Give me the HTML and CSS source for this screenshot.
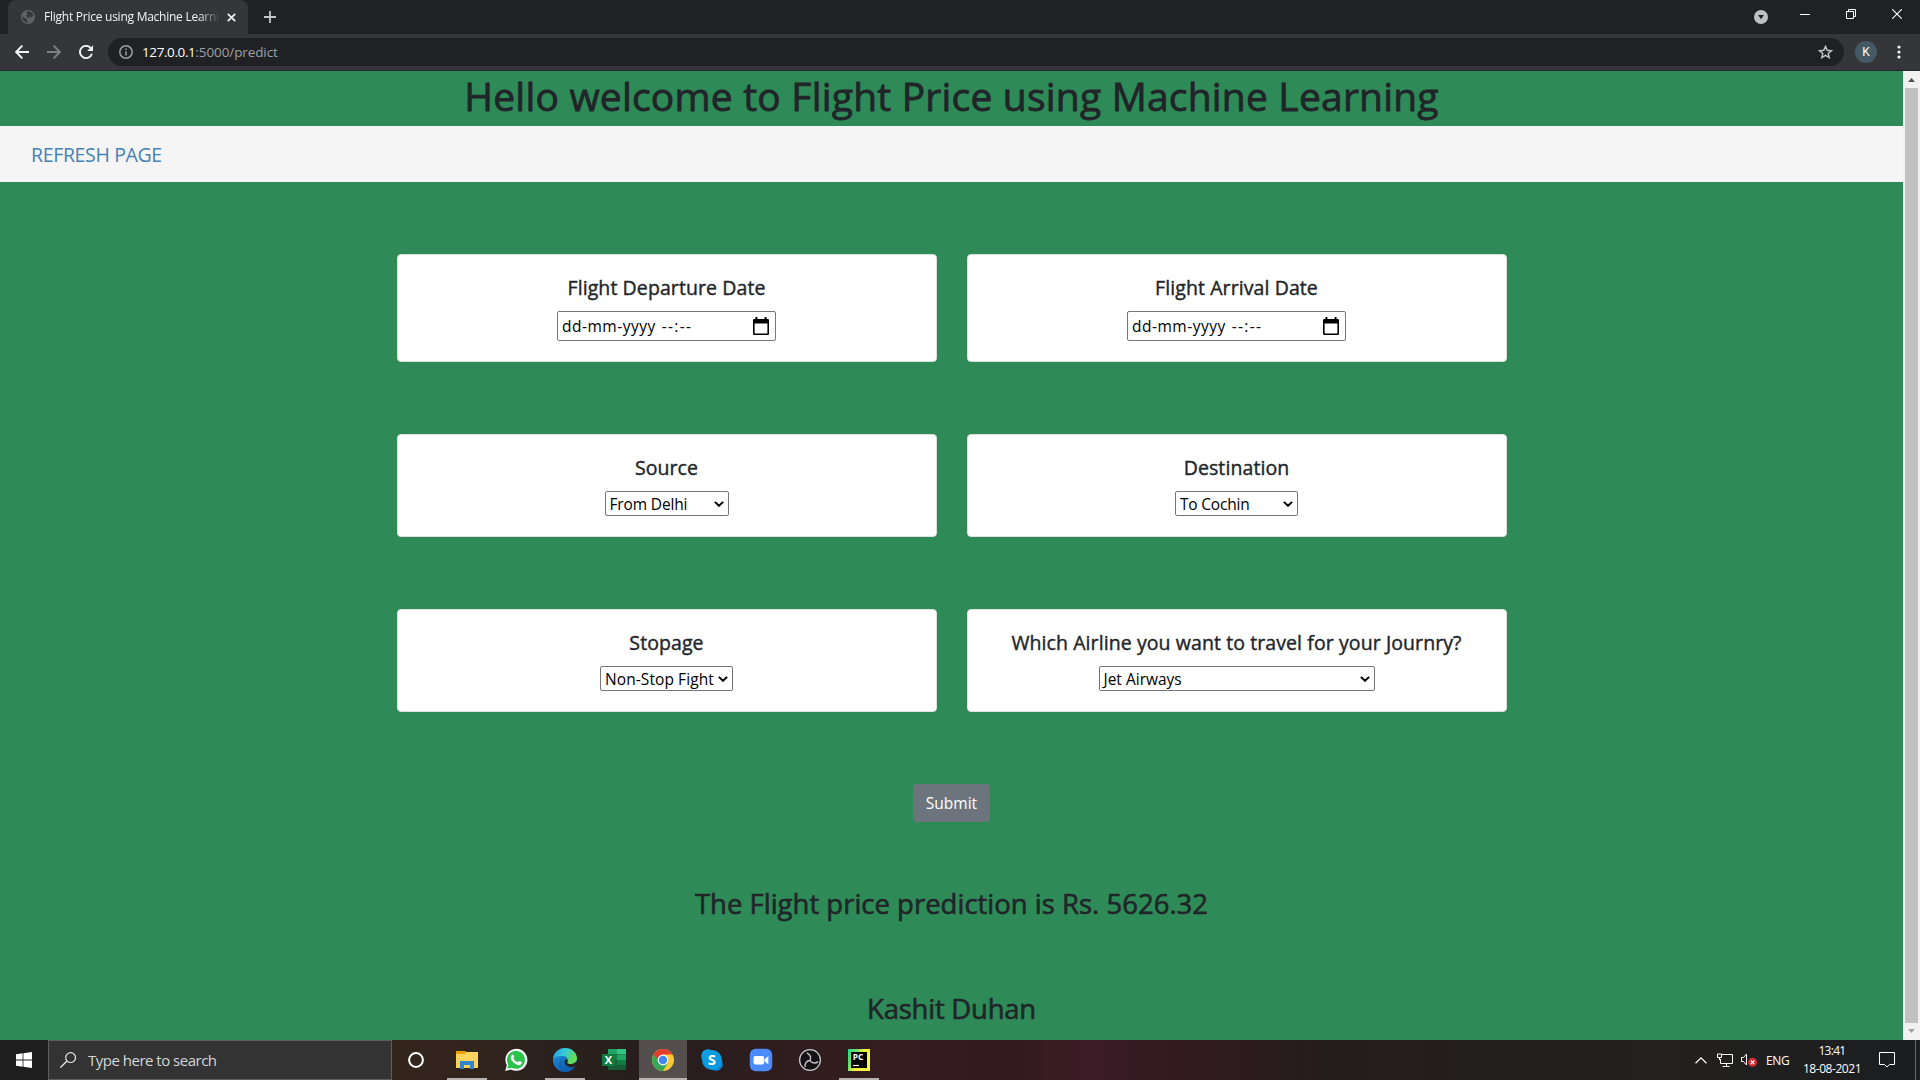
FILE: index.html
```html
<!DOCTYPE html>
<html lang="en">
<head>
<meta charset="utf-8">
<title>Flight Price using Machine Learning</title>
<link rel="stylesheet" href="styles.css">
</head>
<body>
<div class="tabstrip">
  <div class="tab">
    <svg class="tab-globe" viewBox="0 0 14 14"><circle cx="7" cy="7" r="7" fill="#5f6368"/><path d="M1.6 6.2 3.8 8.2 5.6 8.4 5.9 10.6 7 12.4 5.6 12.6A6 6 0 0 1 1.4 6.8ZM5.2 1.6 8.8 1.4 11.6 3.4 12.4 5 10.6 7.2 8.6 6.6 8 8.2 6 7 4.8 5.6 6.6 4.6Z" fill="#35363a"/></svg>
    <span class="tab-title">Flight Price using Machine Learning</span>
    <svg class="tab-close" viewBox="0 0 9 9"><path d="M.8.8 8.2 8.2M8.2.8.8 8.2" stroke="#f1f3f4" stroke-width="1.7"/></svg>
  </div>
  <svg class="new-tab" viewBox="0 0 12 12"><path d="M6 0V12M0 6H12" stroke="#c4c7ca" stroke-width="1.8"/></svg>
  <div class="window-controls">
    <svg class="ctl-search" viewBox="0 0 14 14"><circle cx="7" cy="7" r="7" fill="#bdc1c6"/><path d="M4 5H10L7 9.2Z" fill="#202124"/></svg>
    <svg class="ctl-min" viewBox="0 0 10 10"><path d="M0 5.5H10" stroke="#fff"/></svg>
    <svg class="ctl-restore" viewBox="0 0 10 10"><path d="M.5 2.5H7.5V9.5H.5ZM2.5 2.5V.5H9.5V7.5H7.5" fill="none" stroke="#fff"/></svg>
    <svg class="ctl-close" viewBox="0 0 10 10"><path d="M.2.2 9.8 9.8M9.8.2.2 9.8" stroke="#fff" stroke-width="1.1"/></svg>
  </div>
</div>
<div class="toolbar">
  <svg class="nav-icon" viewBox="0 0 14 14"><path d="M14 7H1.5M7.3 .7 1.2 7 7.3 13.3" fill="none" stroke="#f1f3f4" stroke-width="1.9"/></svg>
  <svg class="nav-icon" viewBox="0 0 14 14"><path d="M0 7H12.5M6.7 .7 12.8 7 6.7 13.3" fill="none" stroke="#7d7f82" stroke-width="1.9"/></svg>
  <svg class="nav-icon" viewBox="0 0 14 14"><path d="M12.9 8.8A6.1 6.1 0 1 1 11.6 2.9" fill="none" stroke="#f1f3f4" stroke-width="1.9"/><path d="M14 .2V6H8.2Z" fill="#f1f3f4"/></svg>
  <div class="omnibox">
    <svg class="info" viewBox="0 0 14 14"><circle cx="7" cy="7" r="6.2" fill="none" stroke="#9aa0a6" stroke-width="1.5"/><path d="M7 6.2V10.4M7 3.6V5.1" stroke="#9aa0a6" stroke-width="1.5"/></svg>
    <span class="url"><span class="host">127.0.0.1</span><span class="path">:5000/predict</span></span>
    <svg class="star" viewBox="0 0 15 14"><path d="M7.5 1.4 9.2 5.3 13.5 5.7 10.2 8.4 11.2 12.6 7.5 10.4 3.8 12.6 4.8 8.4 1.5 5.7 5.8 5.3Z" fill="none" stroke="#c4c7ca" stroke-width="1.4"/></svg>
  </div>
  <span class="avatar">K</span>
  <svg class="menu" viewBox="0 0 4 14"><g fill="#f1f3f4"><circle cx="2" cy="2" r="1.6"/><circle cx="2" cy="7" r="1.6"/><circle cx="2" cy="12" r="1.6"/></g></svg>
</div>
<div class="viewport">
  <main class="page">
    <h1 class="title">Hello welcome to Flight Price using Machine Learning</h1>
    <nav class="navbar"><a>REFRESH PAGE</a></nav>
    <div class="cards">
      <section class="card tall"><h5>Flight Departure Date</h5>
        <div class="datetime"><span class="date">dd-mm-yyyy</span><span class="time">--:--</span><svg class="cal" viewBox="0 0 16 18"><path d="M0 3.2Q0 2 1.2 2H2.4V0H4.4V2H11.6V0H13.6V2H14.8Q16 2 16 3.2V16.8Q16 18 14.8 18H1.2Q0 18 0 16.8ZM1.6 6.4V16.4H14.4V6.4Z" fill-rule="evenodd"/></svg></div></section>
      <section class="card tall"><h5>Flight Arrival Date</h5>
        <div class="datetime"><span class="date">dd-mm-yyyy</span><span class="time">--:--</span><svg class="cal" viewBox="0 0 16 18"><path d="M0 3.2Q0 2 1.2 2H2.4V0H4.4V2H11.6V0H13.6V2H14.8Q16 2 16 3.2V16.8Q16 18 14.8 18H1.2Q0 18 0 16.8ZM1.6 6.4V16.4H14.4V6.4Z" fill-rule="evenodd"/></svg></div></section>
      <section class="card"><h5>Source</h5><div class="select source"><span>From Delhi</span><svg class="chev" viewBox="0 0 10 6"><path d="M.9.9 5 4.8 9.1.9" fill="none" stroke="#000" stroke-width="2"/></svg></div></section>
      <section class="card"><h5>Destination</h5><div class="select destination"><span>To Cochin</span><svg class="chev" viewBox="0 0 10 6"><path d="M.9.9 5 4.8 9.1.9" fill="none" stroke="#000" stroke-width="2"/></svg></div></section>
      <section class="card"><h5>Stopage</h5><div class="select stops"><span>Non-Stop Fight</span><svg class="chev" viewBox="0 0 10 6"><path d="M.9.9 5 4.8 9.1.9" fill="none" stroke="#000" stroke-width="2"/></svg></div></section>
      <section class="card"><h5>Which Airline you want to travel for your Journry?</h5><div class="select airline"><span>Jet Airways</span><svg class="chev" viewBox="0 0 10 6"><path d="M.9.9 5 4.8 9.1.9" fill="none" stroke="#000" stroke-width="2"/></svg></div></section>
    </div>
    <button class="submit">Submit</button>
    <h3 class="result">The Flight price prediction is Rs. 5626.32</h3>
    <h3 class="author">Kashit Duhan</h3>
  </main>
  <div class="scrollbar">
    <svg class="arrow" viewBox="0 0 17 17"><path d="M5 11 8.5 7 12 11Z" fill="#505050"/></svg>
    <div class="thumb"></div>
    <svg class="arrow" viewBox="0 0 17 17"><path d="M5 6 8.5 10 12 6Z" fill="#a3a3a3"/></svg>
  </div>
</div>
<div class="taskbar">
  <div class="start"><svg viewBox="0 0 16 16"><path d="M0 2.2 6.6 1.3V7.5H0ZM7.4 1.2 16 0V7.5H7.4ZM0 8.4H6.6V14.7L0 13.8ZM7.4 8.4H16V16L7.4 14.8Z" fill="#fff"/></svg></div>
  <div class="search"><svg viewBox="0 0 16 16"><circle cx="10.6" cy="5.6" r="4.9" fill="none" stroke="#e6e6e6" stroke-width="1.2"/><path d="M7 9 .4 15.6" stroke="#e6e6e6" stroke-width="1.3"/></svg><span>Type here to search</span></div>
  <div class="apps">
    <div class="app cortana"><svg viewBox="0 0 24 24"><circle cx="12" cy="12" r="6.9" fill="none" stroke="#fff" stroke-width="2"/></svg></div>
    <div class="app running"><svg viewBox="0 0 24 24"><path d="M1 3H10L11 4H23V20H1Z" fill="#ffd35c"/><path d="M1 3H10L11 4.4 9.6 6H1Z" fill="#e5a00d"/><path d="M5 13H19V21H15V17H9V21H5Z" fill="#2f86cf"/><path d="M9 17H15V19.5H9Z" fill="#ffd35c"/></svg></div>
    <div class="app"><svg viewBox="0 0 24 24"><path d="M1.2 22.9 2.8 17.2A11 11 0 1 1 7 21.4Z" fill="#fff"/><path d="M3.2 20.8 4.4 16.7A9 9 0 1 1 7.6 19.7Z" fill="#2bc34c"/><path d="M8 7C9 6.2 9.5 6.6 10.2 8.6 10.4 9.4 9.3 10 9.5 10.5 10.5 12.3 11.8 13.4 13.6 14.1 14.2 14.2 14.8 12.8 15.4 12.9 17.6 13.9 18 14 17.8 14.8 17.3 17 15.4 17.5 13.6 16.9 9.9 15.6 8 13.4 7 11 6.5 9.3 7 7.8 8 7Z" fill="#fff"/></svg></div>
    <div class="app running"><svg viewBox="0 0 24 24"><defs><linearGradient id="e1" x1="0" y1="0" x2="1" y2=".4"><stop offset="0" stop-color="#2196dd"/><stop offset=".5" stop-color="#33c8d8"/><stop offset="1" stop-color="#68dd50"/></linearGradient><linearGradient id="e2" x1="0" y1="0" x2=".7" y2="1"><stop offset="0" stop-color="#1e9be6"/><stop offset="1" stop-color="#0b57a8"/></linearGradient></defs><circle cx="12" cy="12" r="12" fill="url(#e2)"/><path d="M0 11C1 4 6 0 12 0 19 0 24 5 24 10.5 24 14 21 16 18 16 15.5 16 13.8 15.2 14.2 14.2 15.6 12.4 15 8.4 10 8 5 7.6 1 9 0 11Z" fill="url(#e1)"/><path d="M14.2 14.2C13.5 15.4 15.5 16.2 18 16 20.4 15.9 22 14.7 24 13.2L24 18.4 22.3 18C20 20 13 20 11.6 14.6 11.4 12.4 12.3 11.6 13.6 10.9 14.9 11.6 14.8 13.4 14.2 14.2Z" fill="#2b211f"/><path d="M9.6 10C7 14 8 20 14 21 17 21.3 20 20 22.3 17.8 20 22 16 24 12 24 6 23 4 14 9.6 10Z" fill="#1260b0"/></svg></div>
    <div class="app"><svg viewBox="0 0 24 24"><path d="M6 1H15V6.5H6Z" fill="#21a366"/><path d="M15 1H24V6.5H15Z" fill="#33c481"/><path d="M6 6.5H15V12H6Z" fill="#107c41"/><path d="M15 6.5H24V12H15Z" fill="#21a366"/><path d="M6 12H15V22H6Z" fill="#185c37"/><path d="M15 12H24V17H15Z" fill="#107c41"/><path d="M15 17H24V22H15Z" fill="#185c37"/><rect y="6" width="13" height="12" rx="1" fill="#107c41"/><text x="6.5" y="16" class="glyph" font-size="11">X</text></svg></div>
    <div class="app running active"><svg viewBox="0 0 24 24"><circle cx="12" cy="12" r="11" fill="#fcc934"/><path d="M12 12 2.5 6.5A11 11 0 0 1 21.5 6.5H12Z" fill="#e33b2e"/><path d="M2.5 6.5A11 11 0 0 0 12 23L16.8 14.7 12 12Z" fill="#34a853"/><path d="M2.5 6.5 7.2 14.8 12 8Z" fill="#34a853"/><path d="M2.5 6.5 7.4 11.5 12 6.5Z" fill="#e33b2e"/><circle cx="12" cy="12" r="5.4" fill="#fff"/><circle cx="12" cy="12" r="4.2" fill="#4285f4"/></svg></div>
    <div class="app"><svg viewBox="0 0 24 24"><circle cx="8" cy="8" r="6.8" fill="#0aa6e6"/><circle cx="16" cy="16" r="6.8" fill="#0d86d4"/><circle cx="12" cy="12" r="10" fill="#0a9ae0"/><text x="12" y="17.2" class="glyph" font-size="15">S</text></svg></div>
    <div class="app"><svg viewBox="0 0 24 24"><rect x=".8" y=".8" width="22.4" height="22.4" rx="6" fill="#4a8cff"/><rect x="4.6" y="8" width="10.4" height="8.4" rx="1.6" fill="#fff"/><path d="M15.6 11 19.3 8.2V16.2L15.6 13.4Z" fill="#fff"/></svg></div>
    <div class="app"><svg viewBox="0 0 24 24"><circle cx="12" cy="12" r="10.4" fill="#141215" stroke="#c7c5c6" stroke-width="1.3"/><g fill="none" stroke="#c7c5c6" stroke-width="1.4"><path id="blade" d="M12 12.5C12.4 11.6 13 10.4 12.4 8.4 11.8 6.8 10.4 5.6 8.8 4.8"/><use href="#blade" transform="rotate(120 12 12.5)"/><use href="#blade" transform="rotate(240 12 12.5)"/></g></svg></div>
    <div class="app running"><svg viewBox="0 0 24 24"><defs><linearGradient id="pc" x1="0" y1="0" x2="1" y2=".5"><stop offset="0" stop-color="#21d789"/><stop offset=".35" stop-color="#6be26a"/><stop offset=".6" stop-color="#f5ee3c"/><stop offset="1" stop-color="#fcf84a"/></linearGradient></defs><rect x="1" y="1" width="22" height="22" fill="url(#pc)"/><rect x="4" y="4" width="16" height="16" fill="#000"/><text x="11" y="12" class="glyph" font-size="8.4">PC</text><path d="M6 17.5H12" stroke="#fff" stroke-width="1.2"/></svg></div>
  </div>
  <div class="tray">
    <svg class="up" viewBox="0 0 12 7"><path d="M.5 6.3 6 .9 11.5 6.3" fill="none" stroke="#fff" stroke-width="1.2"/></svg>
    <svg class="net" viewBox="0 0 16 14"><path d="M5 1.5H15.5V10.5H3.5V6M9.5 10.5V13M5.5 13.5H12.5M.5 1H4.5V4.5H.5ZM2.5 4.5V7" fill="none" stroke="#fff"/></svg>
    <svg class="vol" viewBox="0 0 16 14"><path d="M.5 4.5H2.5L5.5 1V12L2.5 8.5H.5Z" fill="none" stroke="#fff"/><circle cx="11.5" cy="9.3" r="4.5" fill="#d92b34"/><path d="M9.7 7.5 13.3 11.1M13.3 7.5 9.7 11.1" stroke="#fff" stroke-width="1.1"/></svg>
    <span class="lang">ENG</span>
    <div class="clock"><span class="hours">13:41</span><span class="day">18-08-2021</span></div>
    <svg class="note" viewBox="0 0 16 16"><path d="M.5.5H15.5V12.5H10.5L8 15 5.5 12.5H.5Z" fill="none" stroke="#fff"/></svg>
    <div class="show-desktop"></div>
  </div>
</div>
</body>
</html>
```
FILE: styles.css
```css
* { box-sizing: border-box; }
body {
  margin: 0;
  width: 1920px;
  height: 1080px;
  overflow: hidden;
  display: flex;
  flex-direction: column;
  font-family: "Open Sans", "Noto Sans", sans-serif;
  color: #212529;
  background: #202124;
}
svg { display: block; flex: none; }
h1, h3, h5 { margin: 0; font-weight: 500; white-space: nowrap; }

.tabstrip { height: 34px; display: flex; background: #202124; padding-left: 8px; }
.tab {
  width: 240px;
  height: 34px;
  border-radius: 8px 8px 0 0;
  background: #35363a;
  display: flex;
  align-items: center;
  padding: 0 11px 0 13px;
}
.tab-globe { width: 14px; height: 14px; }
.tab-title {
  width: 176px;
  margin: 0 7px 0 9px;
  overflow: hidden;
  white-space: nowrap;
  font-size: 12px;
  line-height: 16px;
  letter-spacing: -.25px;
  color: #f1f3f4;
  -webkit-mask-image: linear-gradient(90deg, #000 88%, transparent);
  mask-image: linear-gradient(90deg, #000 88%, transparent);
}
.tab-close { width: 9px; height: 9px; }
.new-tab { width: 12px; height: 12px; margin: 11px 0 0 16px; }
.window-controls { margin-left: auto; display: flex; align-items: center; height: 28px; padding-right: 18px; }
.ctl-search { width: 14px; height: 14px; margin: 6px 32px 0 0; }
.ctl-min { width: 10px; height: 10px; margin-right: 36px; }
.ctl-restore { width: 10px; height: 10px; margin-right: 36px; }
.ctl-close { width: 10px; height: 10px; }

.toolbar {
  height: 37px;
  background: #35363a;
  border-bottom: 1px solid #27282b;
  display: flex;
  align-items: center;
  padding-left: 15px;
}
.nav-icon { width: 14px; height: 14px; margin-right: 18px; }
.omnibox {
  width: 1736px;
  height: 28px;
  margin-left: -3px;
  border-radius: 14px;
  background: #202124;
  display: flex;
  align-items: center;
  padding: 0 11px;
}
.info { width: 14px; height: 14px; }
.url { margin-left: 9px; font-size: 13.5px; line-height: 20px; color: #9aa0a6; white-space: nowrap; }
.host { color: #fff; letter-spacing: -.4px; }
.path { letter-spacing: -.1px; }
.star { width: 15px; height: 14px; margin-left: auto; }
.avatar {
  width: 22px;
  height: 22px;
  margin-left: 11px;
  border-radius: 50%;
  background: #455a64;
  color: #fff;
  font: 12px/22px Roboto, sans-serif;
  text-align: center;
}
.menu { width: 4px; height: 14px; margin-left: 20px; }

.viewport { height: 969px; display: flex; }
.page { width: 1903px; background: #2e8b57; display: flex; flex-direction: column; align-items: center; }
.title { height: 55px; font-size: 39px; line-height: 49px; letter-spacing: .2px; -webkit-text-stroke: .8px #212529; }
.navbar { width: 100%; height: 56px; background: #f5f5f5; padding-left: 31px; font-size: 19.5px; line-height: 57px; letter-spacing: -.35px; color: #4682b4; }
.cards { margin-top: 72px; display: grid; grid-template-columns: 540px 540px; column-gap: 30px; row-gap: 72px; }
.card {
  height: 103px;
  border: 1px solid #dfdfdf;
  border-radius: 4px;
  background: #fff;
  display: flex;
  flex-direction: column;
  align-items: center;
  padding-top: 20px;
}
.card.tall { height: 108px; }
h5 { height: 24px; margin-bottom: 12px; font-size: 19.5px; line-height: 26px; letter-spacing: .09px; -webkit-text-stroke: .4px #212529; }
.datetime {
  width: 219px;
  height: 30px;
  border: 1px solid #767676;
  border-radius: 2px;
  display: flex;
  align-items: center;
  padding: 0 6px 0 4px;
  font-size: 15.5px;
  color: #000;
}
.date { letter-spacing: .5px; }
.time { margin-left: 6px; letter-spacing: 1.3px; }
.cal { width: 16px; height: 18px; margin-left: auto; }
.select {
  height: 25px;
  border: 1px solid #767676;
  border-radius: 2px;
  display: flex;
  align-items: center;
  justify-content: space-between;
  padding: 0 4px;
  font-size: 15.5px;
  line-height: 23px;
  color: #000;
}
.select span { padding-top: 2px; }
.source { width: 124px; letter-spacing: -.15px; }
.destination { width: 123px; letter-spacing: -.2px; }
.stops { width: 133px; letter-spacing: .08px; }
.airline { width: 276px; }
.chev { width: 10px; height: 6px; }
.submit {
  width: 77px;
  height: 38px;
  margin-top: 72px;
  border: 0;
  border-radius: 4px;
  background: #6c757d;
  color: #fff;
  font: 15.5px/24px "Open Sans", sans-serif;
  padding: 0;
}
.result, .author { font-size: 27.5px; line-height: 36px; -webkit-text-stroke: .6px #212529; }
.result { margin-top: 64px; }
.author { margin-top: 69px; letter-spacing: -.25px; }
.scrollbar { width: 17px; background: #f1f1f1; display: flex; flex-direction: column; align-items: center; }
.arrow { width: 17px; height: 17px; }
.thumb { width: 13px; flex: 1; background: #c1c1c1; }

.taskbar {
  height: 40px;
  display: flex;
  background: linear-gradient(90deg, #1e1e1e 0, #1e1e1e 48px, #34261d 392px, #31241d 480px, #251e1c 640px, #2e1d1e 760px, #361d20 900px, #33191f 1010px, #3c1c27 1090px, #321a20 1180px, #241d1b 1330px, #22211f 1660px, #1c1d20 1920px);
}
.start { width: 48px; padding: 12px 16px; }
.start svg { width: 16px; height: 16px; }
.search {
  width: 344px;
  border: 1px solid #5e5e5e;
  background: #333;
  display: flex;
  align-items: center;
  padding-left: 11px;
  color: #d6d6d6;
  font-size: 15px;
  letter-spacing: -.5px;
}
.search svg { width: 16px; height: 16px; margin-right: 12px; }
.apps { display: flex; gap: 1px; }
.app { width: 48px; height: 40px; display: flex; justify-content: center; align-items: center; position: relative; }
.app svg { width: 24px; height: 24px; }
.cortana { margin-right: 2px; }
.running::after { content: ""; position: absolute; left: 4px; right: 4px; bottom: 0; height: 2px; background: #b8b2b2; }
.active { background: #544f4e; }
.active::after { left: 0; right: 0; }
.glyph { fill: #fff; font-family: "Open Sans", sans-serif; font-weight: 700; text-anchor: middle; letter-spacing: 0; }
.tray { margin-left: auto; display: flex; align-items: center; color: #fff; font-size: 12px; width: 225px; }
.up { width: 12px; height: 7px; }
.net { width: 16px; height: 14px; margin-left: 10px; }
.vol { width: 16px; height: 14px; margin-left: 8px; }
.lang { width: 24px; margin-left: 9px; letter-spacing: -.3px; white-space: nowrap; }
.clock { width: 60px; margin-left: 12px; display: flex; flex-direction: column; align-items: center; line-height: 18px; white-space: nowrap; }
.hours { letter-spacing: -.7px; }
.day { letter-spacing: -.45px; }
.note { width: 16px; height: 16px; margin-left: auto; }
.show-desktop { width: 5px; height: 40px; margin-left: 20px; border-left: 1px solid #6a6a6b; }
```
